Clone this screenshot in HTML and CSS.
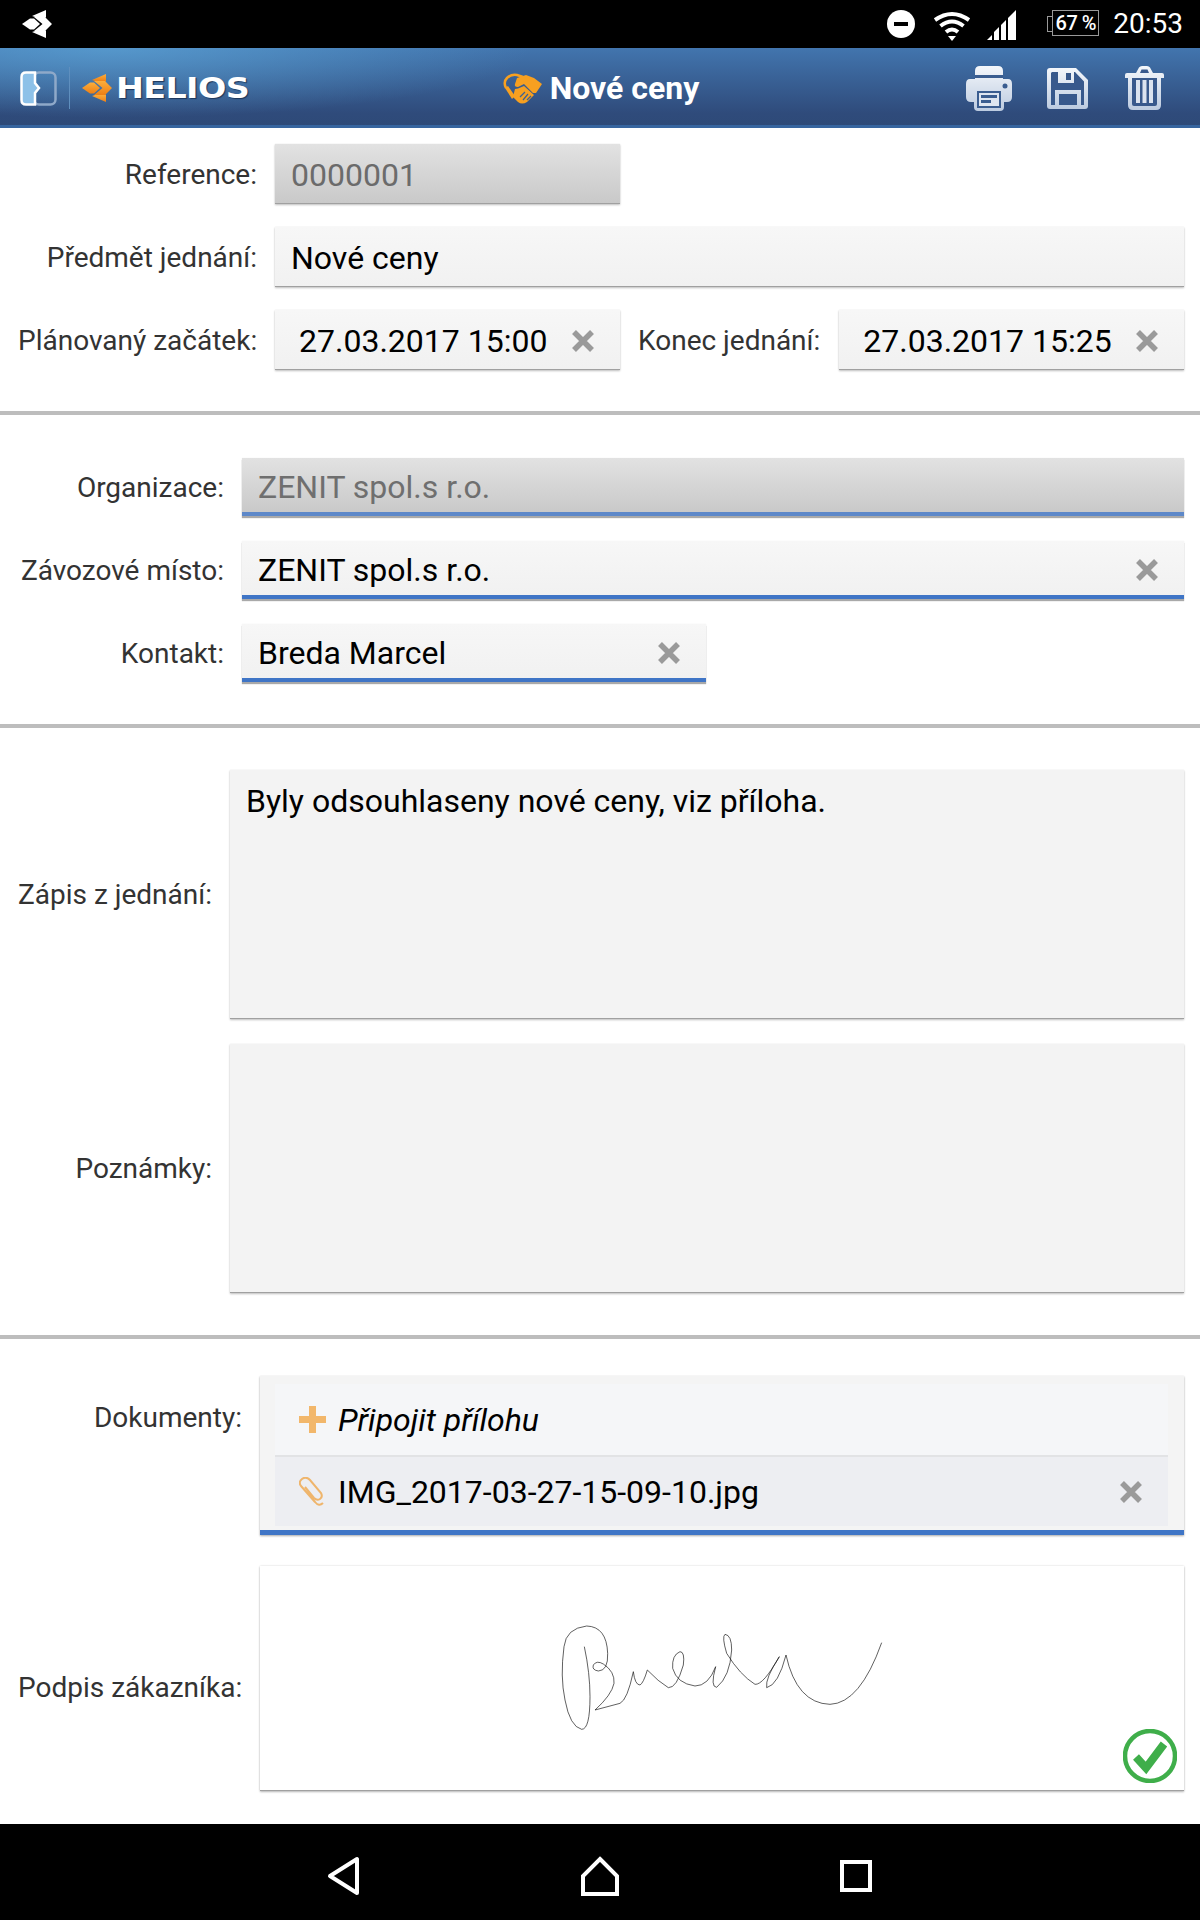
FILE: index.html
```html
<!DOCTYPE html>
<html lang="cs">
<head>
  <meta charset="UTF-8" />
  <title>Nové ceny</title>
  <link rel="stylesheet" href="styles.css">
</head>
<body>

  <svg class="defs" width="0" height="0">
    <defs>
      <linearGradient id="iconFill" x1="0" y1="0" x2="0" y2="1">
        <stop offset="0" stop-color="#f4f7fb"/>
        <stop offset="1" stop-color="#bccbe0"/>
      </linearGradient>
      <linearGradient id="starFill" x1="0" y1="0" x2="0" y2="1">
        <stop offset="0" stop-color="#fbae3c"/>
        <stop offset="1" stop-color="#ee7f14"/>
      </linearGradient>
      <symbol id="star" viewBox="0 0 30 28">
        <polygon points="10,6 24,0 24,7.500 14.500,7.500"/>
        <polygon points="10,22 24,28 24,20.500 14.500,20.500"/>
        <polygon points="0,14 8,8.500 12,8.500 18,14 12,19.500 8,19.500"/>
        <polygon points="12,7 23,7 30,14 23,21 12,21 20.500,14"/>
      </symbol>
      <symbol id="clear" viewBox="0 0 22 22">
        <path d="M2 2L20 20M20 2L2 20" fill="none" stroke="#9a9a9a" stroke-width="5.500"/>
      </symbol>
    </defs>
  </svg>

  <!-- Status bar -->
  <div class="status-bar">
    <svg class="status-logo" width="32" height="28" fill="#fff"><use href="#star"/></svg>
    <div class="status-right">
      <svg width="28" height="28" viewBox="0 0 28 28">
        <circle cx="14" cy="14" r="14" fill="#fff"/>
        <rect x="7" y="12" width="14" height="4" fill="#000"/>
      </svg>
      <svg class="wifi" width="38" height="30" viewBox="0 0 38 30" fill="none" stroke="#fff" stroke-width="4">
        <path d="M2 9Q19 -3 36 9"/>
        <path d="M7.500 15Q19 6 30.500 15"/>
        <path d="M13 21Q19 16 25 21"/>
        <polygon points="15,25 23,25 19,30" fill="#fff" stroke="none"/>
      </svg>
      <svg class="signal" width="29" height="30" viewBox="0 0 29 30" fill="#fff">
        <polygon points="0,30 5,25 5,30"/>
        <polygon points="7,30 7,22 12,17 12,30"/>
        <polygon points="14,30 14,15 19,10 19,30"/>
        <polygon points="21,30 21,8 29,0 29,30"/>
      </svg>
      <div class="battery"><span>67 %</span></div>
      <span class="clock">20:53</span>
    </div>
  </div>

  <!-- App bar -->
  <header class="app-bar">
    <div class="app-left">
      <svg width="37" height="35" viewBox="0 0 37 35">
        <rect x="14" y="1.500" width="21.500" height="32" rx="5" fill="none" stroke="#8fa9c9" stroke-width="2.500"/>
        <path d="M6 1.500H15V12L19 17L15 22V33.500H6Q1.500 33.500 1.500 29V6Q1.500 1.500 6 1.500Z" fill="#8dc1e8" stroke="#fff" stroke-width="2.500"/>
      </svg>
      <span class="app-sep"></span>
      <svg class="app-star" width="30" height="28" fill="url(#starFill)"><use href="#star"/></svg>
      <span class="helios">HELIOS</span>
    </div>
    <div class="app-title">
      <svg width="39" height="31" viewBox="0 0 39 31">
        <path d="M3 15Q0 9 4 5Q8 1 14 2L20 4" fill="none" stroke="#f7a020" stroke-width="2.500"/>
        <path d="M2 15L5 13L12 23L9 26Z" fill="#f7a020"/>
        <path d="M14 5L23 2L31 5L39 11L33 20L30 20L21 11L15 14Q11 14 12 11Z" fill="#f7a020"/>
        <path d="M12 16L15 15.500L21 13L31 22L24 29Q19 32 15 29L10 24Z" fill="#f7a020"/>
        <path d="M17 24L22 19M20 27L25 21M24 27L28 23" fill="none" stroke="#3a6296" stroke-width="1.200"/>
      </svg>
      <span>Nové ceny</span>
    </div>
    <div class="app-actions">
      <svg width="46" height="45" viewBox="0 0 46 45">
        <path d="M9 13V5Q9 0 14 0H32Q37 0 37 5V13H42Q46 13 46 18V31Q46 36 41 36H38V41Q38 45 34 45H12Q8 45 8 41V36H5Q0 36 0 31V18Q0 13 4 13Z" fill="url(#iconFill)"/>
        <rect x="9" y="9" width="28" height="3" fill="#3a5d90"/>
        <circle cx="39" cy="20" r="2.500" fill="#3a5d90"/>
        <rect x="11" y="25" width="24" height="17" fill="#3a5d90"/>
        <rect x="13" y="27" width="20" height="13" fill="#dde5f0"/>
        <rect x="15" y="29" width="16" height="3" fill="#3a5d90"/>
        <rect x="15" y="34" width="10" height="3" fill="#3a5d90"/>
      </svg>
      <svg class="save-icon" width="41" height="41" viewBox="0 0 41 41">
        <path d="M3 0H29L41 12V38Q41 41 38 41H3Q0 41 0 38V3Q0 0 3 0Z" fill="url(#iconFill)"/>
        <path d="M5 4H11V15H27V4H28L37 13.500V37H34V22H8V37H4V5Z" fill="#38598c"/>
        <rect x="19" y="5" width="5" height="7" fill="#38598c"/>
        <rect x="12" y="26" width="18" height="11" fill="#38598c"/>
      </svg>
      <svg width="39" height="44" viewBox="0 0 39 44">
        <path d="M11 7L14 1.500Q15 0 17 0H22Q24 0 25 1.500L28 7H37Q39 7 39 9V12H36V39Q36 44 31 44H8Q3 44 3 39V12H0V9Q0 7 2 7Z" fill="url(#iconFill)"/>
        <path d="M15 7L16.500 3.500H22.500L24 7Z" fill="#38598c"/>
        <path d="M7 12H32V38Q32 40 30 40H9Q7 40 7 38Z" fill="#38598c"/>
        <rect x="11" y="14" width="4" height="23" fill="#dbe3ef"/>
        <rect x="17.500" y="14" width="4" height="23" fill="#dbe3ef"/>
        <rect x="24" y="14" width="4" height="23" fill="#dbe3ef"/>
      </svg>
    </div>
  </header>

  <main class="content">

    <section class="section sec-head">
      <div class="row">
        <label class="label">Reference:</label>
        <div class="field disabled half">0000001</div>
      </div>
      <div class="row">
        <label class="label">Předmět jednání:</label>
        <div class="field grow">Nové ceny</div>
      </div>
      <div class="row">
        <label class="label">Plánovaný začátek:</label>
        <div class="field half date">
          <span>27.03.2017 15:00</span>
          <svg class="clear" width="22" height="22"><use href="#clear"/></svg>
        </div>
        <label class="label-end">Konec jednání:</label>
        <div class="field grow date">
          <span>27.03.2017 15:25</span>
          <svg class="clear" width="22" height="22"><use href="#clear"/></svg>
        </div>
      </div>
    </section>

    <section class="section sec-org">
      <div class="row">
        <label class="label">Organizace:</label>
        <div class="field disabled lookup muted grow">ZENIT spol.s r.o.</div>
      </div>
      <div class="row">
        <label class="label">Závozové místo:</label>
        <div class="field lookup grow">
          <span>ZENIT spol.s r.o.</span>
          <svg class="clear" width="22" height="22"><use href="#clear"/></svg>
        </div>
      </div>
      <div class="row">
        <label class="label">Kontakt:</label>
        <div class="field lookup contact">
          <span>Breda Marcel</span>
          <svg class="clear" width="22" height="22"><use href="#clear"/></svg>
        </div>
      </div>
    </section>

    <section class="section sec-notes">
      <div class="row tall">
        <label class="label">Zápis z jednání:</label>
        <div class="field area grow">Byly odsouhlaseny nové ceny, viz příloha.</div>
      </div>
      <div class="row tall">
        <label class="label">Poznámky:</label>
        <div class="field area grow"></div>
      </div>
    </section>

    <section class="section sec-docs">
      <div class="row docs-row">
        <label class="label label-top">Dokumenty:</label>
        <div class="docs grow">
          <div class="doc-item doc-add">
            <svg width="27" height="27" viewBox="0 0 27 27" fill="#f2b76b">
              <rect x="10" y="0" width="7" height="27"/>
              <rect x="0" y="10" width="27" height="7"/>
            </svg>
            <em>Připojit přílohu</em>
          </div>
          <div class="doc-item doc-file">
            <svg width="27" height="29" viewBox="0 0 27 29" fill="none" stroke="#efb56c" stroke-width="2">
              <path d="M24 26Q20 30 16 25L2 9Q-1 5 3 2Q7 -1 11 3L22 16Q24 20 21 22Q18 24 15 21L6 10"/>
            </svg>
            <span>IMG_2017-03-27-15-09-10.jpg</span>
            <svg class="clear" width="22" height="22"><use href="#clear"/></svg>
          </div>
        </div>
      </div>
      <div class="row sign-row">
        <label class="label label-low">Podpis zákazníka:</label>
        <div class="signature grow">
          <svg class="sign-line" width="380" height="150" viewBox="0 0 1140 450">
            <path d="M133 140Q150 220 150 290Q150 388 125 388Q90 380 75 300Q60 230 72 140Q78 85 140 78Q200 80 203 160Q205 212 175 213Q155 210 160 195Q170 180 190 192Q225 215 222 250Q215 285 165 330L240 310Q262 300 280 215Q285 255 300 255Q310 250 322 210Q355 245 385 263Q410 265 430 195Q435 155 420 155Q395 165 398 205Q410 250 465 258Q505 258 527 200Q510 262 530 262Q570 230 575 150Q575 105 555 103Q545 110 560 160Q600 225 645 253Q670 255 718 170Q675 235 680 263Q715 255 738 165Q770 310 870 313Q960 310 1025 128" fill="none" stroke="#111" stroke-width="2"/>
          </svg>
          <svg class="sign-ok" width="54" height="54" viewBox="0 0 54 54">
            <circle cx="27" cy="27" r="25" fill="#fff" stroke="#3fae4a" stroke-width="4.500"/>
            <path d="M13 28L23 39L41 15" fill="none" stroke="#3fae4a" stroke-width="8"/>
          </svg>
        </div>
      </div>
    </section>

  </main>

  <!-- Navigation bar -->
  <nav class="nav-bar">
    <svg width="34" height="40" viewBox="0 0 34 40" fill="none" stroke="#fff" stroke-width="4">
      <path d="M31 3V37L4 20Z" stroke-linejoin="round"/>
    </svg>
    <svg width="40" height="40" viewBox="0 0 40 40" fill="none" stroke="#fff" stroke-width="4">
      <path d="M20 3L37 20V38H3V20Z"/>
    </svg>
    <svg width="32" height="32" viewBox="0 0 32 32" fill="none" stroke="#fff" stroke-width="4">
      <rect x="2" y="2" width="28" height="28"/>
    </svg>
  </nav>

</body>
</html>
```

FILE: styles.css
```css
* {
  margin: 0;
  padding: 0;
  box-sizing: border-box;
}

body {
  width: 1200px;
  height: 1920px;
  display: flex;
  flex-direction: column;
  font-family: Roboto, 'Liberation Sans', sans-serif;
  background: #fff;
  overflow: hidden;
}

svg {
  display: block;
  flex: none;
}

.defs {
  position: absolute;
}

/* Status bar */
.status-bar {
  height: 48px;
  background: #000;
  display: flex;
  align-items: center;
  justify-content: space-between;
  padding: 0 17px 0 21px;
  color: #fff;
}

.status-right {
  display: flex;
  align-items: center;
}

.wifi {
  margin: 4px 0 0 18px;
}

.signal {
  margin: 2px 0 0 16px;
}

.battery {
  position: relative;
  width: 47px;
  height: 26px;
  margin: -2px 0 0 36px;
  border: 1px solid #999;
  display: flex;
  align-items: center;
  justify-content: center;
  font-size: 20px;
  font-weight: 500;
  letter-spacing: -0.5px;
  white-space: nowrap;
}

/* little battery nub on the left */
.battery::before {
  content: "";
  position: absolute;
  left: -6px;
  top: 5px;
  width: 5px;
  height: 14px;
  border: 1px solid #999;
  border-right: none;
}

.clock {
  margin-left: 14px;
  font-size: 28px;
  line-height: 32px;
}

/* App bar */
.app-bar {
  height: 80px;
  display: grid;
  grid-template-columns: 1fr auto 1fr;
  align-items: center;
  padding: 3px 16px 0 20px;
  border-bottom: 3px solid #37659f;
  background:
    radial-gradient(ellipse 420px 70px at 110px 0, rgba(96, 170, 220, 0.65), rgba(96, 170, 220, 0)),
    linear-gradient(to bottom, #4275ae 0%, #2f4b7b 85%, #2e4a78 100%);
}

.app-left {
  display: flex;
  align-items: center;
}

.app-sep {
  width: 1px;
  height: 42px;
  margin-left: 12px;
  background: #5f8fbe;
}

.app-star {
  margin-left: 12px;
}

.helios {
  margin: 2px 0 0 4px;
  font-family: 'DejaVu Sans', sans-serif;
  font-size: 28px;
  line-height: 28px;
  font-weight: bold;
  color: #fff;
  letter-spacing: -0.5px;
  display: inline-block;
  transform: scaleX(1.19);
  transform-origin: left center;
  text-shadow: 1px 1px 1px #1d3558;
}

.app-title {
  display: flex;
  align-items: center;
  gap: 8px;
  margin-left: -2px;
  font-size: 32px;
  font-weight: bold;
  color: #fff;
}

.app-actions {
  display: flex;
  align-items: center;
  justify-content: flex-end;
  gap: 35px;
  padding-right: 20px;
}

.save-icon {
  margin-right: 2px;
}

/* Form */
.content {
  flex: 1;
}

.section {
  padding: 42px 16px 41px 18px;
  border-bottom: 4px solid #bdbdbd;
  display: flex;
  flex-direction: column;
  gap: 23px;
  font-size: 28px;
}

.section:last-child {
  border-bottom: none;
}

.sec-head {
  padding-top: 16px;
}

.row {
  display: flex;
  align-items: center;
  height: 60px;
}

.label {
  flex: none;
  text-align: right;
  color: #333;
  white-space: nowrap;
}

.sec-head .label { width: 239px; margin-right: 18px; }
.sec-org .label { width: 206px; margin-right: 18px; }
.sec-notes .label { width: 194px; margin-right: 18px; }
.sec-docs .label { width: 224px; margin-right: 18px; }

.label-end {
  margin: 0 19px 0 18px;
  color: #333;
  white-space: nowrap;
}

.field {
  height: 60px;
  padding: 2px 16px 0;
  display: flex;
  align-items: center;
  justify-content: space-between;
  font-size: 32px;
  color: #000;
  background: linear-gradient(to bottom, #f7f7f7, #f1f1f1);
  border-bottom: 1px solid #a0a0a0;
  box-shadow: 0 1px 2px rgba(0, 0, 0, 0.25), 0 0 1px rgba(0, 0, 0, 0.08);
}

.grow {
  flex: 1;
}

.half {
  width: 345px;
  flex: none;
}

.date {
  padding-left: 24px;
}

.clear {
  margin-right: 10px;
}

.disabled {
  color: #6b6b6b;
  background: linear-gradient(to bottom, #e2e2e2, #c9c9c9);
}

.muted {
  color: #6f6f6f;
}

.lookup {
  padding-top: 4px;
  border-bottom: 4px solid #3f75c6;
  box-shadow: 0 2px 1px #a9a9a9, 0 0 1px rgba(0, 0, 0, 0.08);
  height: 58px;
  margin-top: -1px;
}

.lookup.disabled {
  border-bottom-color: #5d88c9;
}

.contact {
  width: 464px;
  flex: none;
}

.tall {
  height: 249px;
}

.sec-notes {
  gap: 25px;
  padding-bottom: 42px;
}

.area {
  height: 249px;
  align-items: flex-start;
  padding-top: 13px;
  line-height: 36px;
  background: #f3f3f3;
}

/* Documents and signature */
.sec-docs {
  padding-top: 37px;
  padding-bottom: 0;
  gap: 31px;
}

.docs-row {
  height: 159px;
  align-items: flex-start;
}

.label.label-top {
  padding-top: 25px;
}

.docs {
  height: 159px;
  padding: 8px 16px 0 15px;
  background: #f4f4f4;
  border-bottom: 5px solid #3f75c6;
  box-shadow: 0 1px 2px #a9a9a9, 0 0 1px rgba(0, 0, 0, 0.08);
}

.doc-item {
  display: flex;
  align-items: center;
  padding-left: 24px;
  font-size: 32px;
  color: #000;
}

.doc-item svg:first-child {
  margin-right: 12px;
}

.doc-item em {
  font-style: italic;
}

.doc-add {
  height: 73px;
  background: #f5f6f8;
  border-bottom: 2px solid #e2e3e5;
}

.doc-file {
  height: 69px;
  background: #edeef2;
}

.doc-file .clear {
  margin-left: auto;
  margin-right: 26px;
}

.sign-row {
  height: 225px;
}

.label.label-low {
  padding-top: 18px;
}

.signature {
  position: relative;
  height: 225px;
  background: #fff;
  border-bottom: 1px solid #a0a0a0;
  box-shadow: 0 1px 2px rgba(0, 0, 0, 0.25), 0 0 2px rgba(0, 0, 0, 0.12);
}

.sign-line {
  position: absolute;
  left: 280px;
  top: 34px;
}

.sign-ok {
  position: absolute;
  right: 7px;
  bottom: 7px;
}

/* Navigation bar */
.nav-bar {
  height: 96px;
  flex: none;
  background: #000;
  display: flex;
  align-items: center;
  gap: 220px;
  padding: 7px 0 0 326px;
}
```
